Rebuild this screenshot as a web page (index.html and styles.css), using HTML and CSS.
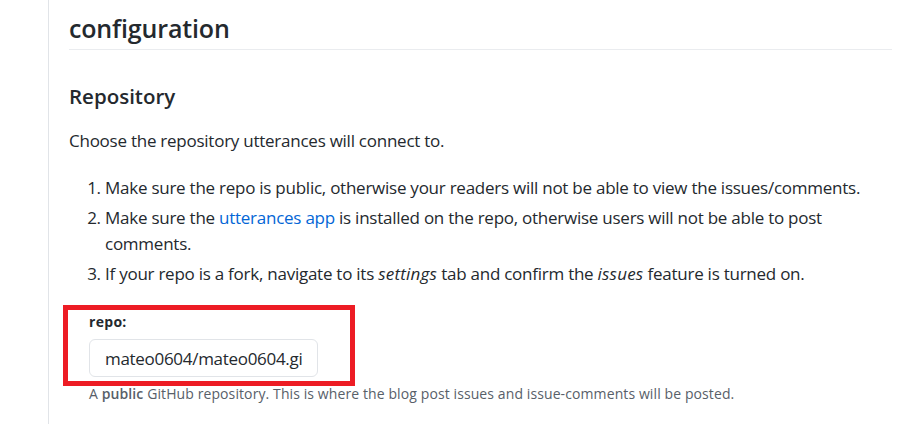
FILE: index.html
```html
<!DOCTYPE html>
<html lang="en">
<head>
<meta charset="utf-8">
<title>utterances configuration</title>
<link rel="stylesheet" href="styles.css">
</head>
<body>
<main class="page">
  <h1 class="title">configuration</h1>
  <h2 class="section-title">Repository</h2>
  <p class="lead">Choose the repository utterances will connect to.</p>
  <ol class="steps">
    <li>Make sure the repo is public, otherwise your readers will not be able to view the issues/comments.</li>
    <li>Make sure the <a href="#" class="link">utterances app</a> is installed on the repo, otherwise users will not be able to post comments.</li>
    <li>If your repo is a fork, navigate to its <em class="em">settings</em> tab and confirm the <em class="em">issues</em> feature is turned on.</li>
  </ol>
  <div class="form-group">
    <div class="highlight"></div>
    <label class="field-label" for="repo">repo:</label>
    <input id="repo" class="field-input" type="text" value="mateo0604/mateo0604.gi">
    <p class="note">A <strong>public</strong> GitHub repository. This is where the blog post issues and issue-comments will be posted.</p>
  </div>
</main>
</body>
</html>
```
FILE: styles.css
```css
html, body {
  margin: 0;
  padding: 0;
  background: #ffffff;
}

body {
  font-family: "Open Sans", "Noto Sans", sans-serif;
  color: #24292e;
  font-size: 17px;
  letter-spacing: -0.25px;
}

.page {
  margin-left: 48px;
  margin-right: 14px;
  border-left: 1px solid #e1e4e8;
  padding: 13px 0 0 20px;
  min-height: calc(100vh - 13px);
  box-sizing: border-box;
}

.title {
  margin: 0;
  font-size: 25px;
  line-height: 30px;
  font-weight: 600;
  letter-spacing: -0.15px;
  padding-bottom: 6px;
  border-bottom: 1px solid #eaecef;
}

.section-title {
  margin: 34px 0 0;
  font-size: 20.5px;
  line-height: 25px;
  font-weight: 600;
  letter-spacing: 0;
}

.lead {
  margin: 19px 0 0;
  line-height: 26px;
}

.steps {
  margin: 21px 0 0;
  padding-left: 36px;
  line-height: 26px;
}

.steps li + li {
  margin-top: 4px;
}

.em {
  letter-spacing: 0.2px;
}

.link {
  color: #0366d6;
  text-decoration: none;
}

.form-group {
  position: relative;
  margin-top: 25px;
  padding-left: 20px;
}

.highlight {
  position: absolute;
  top: -7px;
  left: -6px;
  width: 292px;
  height: 81px;
  border: 5px solid #ed1c24;
  box-sizing: border-box;
  pointer-events: none;
}

.field-label {
  display: block;
  font-size: 14px;
  line-height: 20px;
  font-weight: 700;
  letter-spacing: 0.3px;
}

.field-input {
  display: block;
  margin-top: 7px;
  width: 229px;
  height: 38px;
  box-sizing: border-box;
  padding: 0 11px 0 15px;
  border: 1px solid #e1e4e8;
  border-radius: 6px;
  font-family: inherit;
  font-size: 17px;
  letter-spacing: -0.3px;
  color: #24292e;
  background: #ffffff;
  outline: none;
}

.note {
  margin: 7px 0 0;
  font-size: 14px;
  line-height: 20px;
  color: #586069;
  letter-spacing: 0.1px;
}

.note strong {
  font-weight: 600;
}
```
